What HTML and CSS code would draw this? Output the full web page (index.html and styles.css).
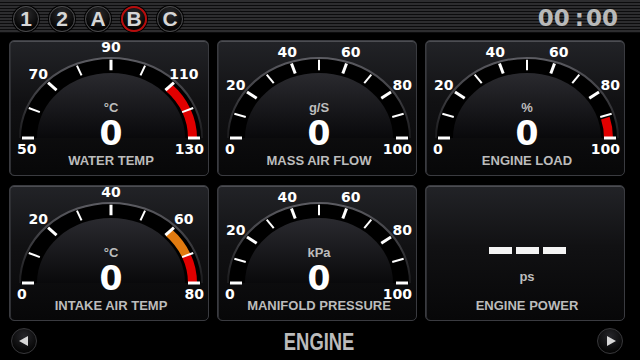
FILE: index.html
```html
<!DOCTYPE html>
<html lang="en">
<head>
    <meta charset="UTF-8">
    <meta name="viewport" content="width=device-width, initial-scale=1.0">
    <title>Engine Gauges</title>
    <link rel="stylesheet" href="styles.css">
</head>
<body>
    <header class="topbar">
        <div class="presets">
            <span class="preset">1</span>
            <span class="preset">2</span>
            <span class="preset">A</span>
            <span class="preset selected">B</span>
            <span class="preset">C</span>
        </div>
        <div class="clock">00<span class="colon">:</span>00</div>
    </header>

    <main class="panels">
        <section class="panel">
            <svg class="dial" viewBox="0 0 198 134" data-labels="50,70,90,110,130" data-zones="135:180:#e00000"></svg>
            <div class="readout">
                <span class="unit">°C</span>
                <span class="value">0</span>
                <span class="title">WATER TEMP</span>
            </div>
        </section>
        <section class="panel">
            <svg class="dial" viewBox="0 0 198 134" data-labels="0,20,40,60,80,100"></svg>
            <div class="readout">
                <span class="unit">g/S</span>
                <span class="value">0</span>
                <span class="title">MASS AIR FLOW</span>
            </div>
        </section>
        <section class="panel">
            <svg class="dial" viewBox="0 0 198 134" data-labels="0,20,40,60,80,100" data-zones="164:180:#e00000"></svg>
            <div class="readout">
                <span class="unit">%</span>
                <span class="value">0</span>
                <span class="title">ENGINE LOAD</span>
            </div>
        </section>
        <section class="panel">
            <svg class="dial" viewBox="0 0 198 134" data-labels="0,20,40,60,80" data-zones="135:157.5:#e07a10 157.5:180:#e00000"></svg>
            <div class="readout">
                <span class="unit">°C</span>
                <span class="value">0</span>
                <span class="title">INTAKE AIR TEMP</span>
            </div>
        </section>
        <section class="panel">
            <svg class="dial" viewBox="0 0 198 134" data-labels="0,20,40,60,80,100"></svg>
            <div class="readout">
                <span class="unit">kPa</span>
                <span class="value">0</span>
                <span class="title">MANIFOLD PRESSURE</span>
            </div>
        </section>
        <section class="panel">
            <div class="readout no-dial">
                <div class="dashes"><i></i><i></i><i></i></div>
                <span class="unit">ps</span>
                <span class="title">ENGINE POWER</span>
            </div>
        </section>
    </main>

    <footer class="bottombar">
        <span class="arrow prev"></span>
        <span class="page-name">ENGINE</span>
        <span class="arrow next"></span>
    </footer>

<script>
    const CX = 101, CY = 97, SY = 0.88; // centre of the dial, vertical squash

    function pt(r, deg) {
        const a = deg * Math.PI / 180;
        return [(CX - r * Math.cos(a)).toFixed(2), (CY - r * SY * Math.sin(a)).toFixed(2)];
    }

    function arc(r, from, to) {
        const [x1, y1] = pt(r, from);
        const [x2, y2] = pt(r, to);
        return `M${x1},${y1} A${r},${(r * SY).toFixed(2)} 0 0 1 ${x2},${y2}`;
    }

    document.querySelectorAll('.dial').forEach((svg, n) => {
        const labels = svg.dataset.labels.split(',');
        const zones = svg.dataset.zones ? svg.dataset.zones.split(' ') : [];
        const steps = (labels.length - 1) * 2;
        let out = `<defs>
            <linearGradient id="dome${n}" x1="0" y1="0" x2="0" y2="1">
                <stop offset="0" stop-color="#2a2a2f"/>
                <stop offset="1" stop-color="#09090b"/>
            </linearGradient>
            <linearGradient id="rim${n}" x1="0" y1="0" x2="0" y2="1">
                <stop offset="0" stop-color="#5c5c62"/>
                <stop offset="1" stop-color="#1a1a1c"/>
            </linearGradient>
        </defs>`;

        out += `<path d="${arc(91, 0, 180)} Z" fill="#000"/>`;
        out += `<path d="${arc(91, 0, 180)}" fill="none" stroke="url(#rim${n})" stroke-width="2"/>`;
        out += `<path d="${arc(74, 0, 180)} Z" fill="url(#dome${n})"/>`;

        // coloured warning zones
        zones.forEach(z => {
            const [from, to, color] = z.split(':');
            out += `<path d="${arc(81.5, +from, +to)}" fill="none" stroke="${color}" stroke-width="9"/>`;
        });

        // tick marks
        for (let i = 0; i <= steps; i++) {
            const deg = 180 * i / steps;
            const [x1, y1] = pt(89, deg);
            const [x2, y2] = pt(77, deg);
            out += `<line x1="${x1}" y1="${y1}" x2="${x2}" y2="${y2}" class="${i % 2 ? 'minor' : 'major'}"/>`;
        }

        // scale numbers
        labels.forEach((txt, j) => {
            const deg = 180 * j / (labels.length - 1);
            if (j === 0) {
                out += `<text x="7" y="113" text-anchor="start">${txt}</text>`;
            } else if (j === labels.length - 1) {
                out += `<text x="194" y="113" text-anchor="end">${txt}</text>`;
            } else {
                const [x, y] = pt(103, deg);
                out += `<text x="${x}" y="${(+y + 5).toFixed(2)}" text-anchor="middle">${txt}</text>`;
            }
        });

        svg.innerHTML = out;
    });
</script>
</body>
</html>
```

FILE: styles.css
```css
body {
    margin: 0;
    width: 640px;
    height: 360px;
    overflow: hidden;
    background: #000;
    font-family: "Liberation Sans", Arial, sans-serif;
    color: #fff;
}

/* top strip with preset buttons and clock */
.topbar {
    height: 33px;
    box-sizing: border-box;
    padding: 2px 22px 0 13px;
    display: flex;
    align-items: center;
    justify-content: space-between;
    background: repeating-linear-gradient(#2d2d2f 0 2px, #0c0c0d 2px 3px);
}
.presets {
    display: flex;
    gap: 10px;
    margin-top: 2px;
}
.preset {
    width: 26px;
    height: 26px;
    box-sizing: border-box;
    border-radius: 50%;
    border: 1px solid #4a4a4c;
    box-shadow: 0 0 0 1px #000;
    background: radial-gradient(circle at 50% 30%, #2c2c2e, #050505 70%);
    display: flex;
    align-items: center;
    justify-content: center;
    font-weight: bold;
    font-size: 21px;
    line-height: 1;
    color: #d6d6d6;
}
.preset.selected {
    border: 2px solid #b80c0c;
}
.clock {
    font-family: "DejaVu Sans", sans-serif;
    font-weight: bold;
    font-size: 23px;
    color: #b9b9b9;
}
.clock .colon {
    margin: 0 2px 0 5px;
}

/* gauge grid */
.panels {
    display: grid;
    grid-template-columns: repeat(3, 200px);
    grid-auto-rows: 136px;
    gap: 9px 8px;
    padding: 7px 0 0 9px;
}
.panel {
    box-sizing: border-box;
    border: 1px solid #3a3b40;
    border-radius: 5px;
    background: linear-gradient(#222327, #111113 45%, #070708);
    box-shadow: 0 0 0 1px #000, inset 0 1px 0 #4c4d52, inset 1px 0 0 #2e2f33;
    display: grid;
}
.panel > * {
    grid-area: 1 / 1;
}
.dial {
    display: block;
    width: 198px;
    height: 134px;
    overflow: visible;
}
.dial line {
    stroke: #fff;
}
.dial line.major {
    stroke-width: 3;
}
.dial line.minor {
    stroke-width: 2;
}
.dial text {
    font-family: "DejaVu Sans", sans-serif;
    font-weight: bold;
    font-size: 14px;
    fill: #fff;
}

.readout {
    display: flex;
    flex-direction: column;
    align-items: center;
    justify-content: flex-end;
    padding: 0 0 8px 4px;
}
.unit {
    font-weight: bold;
    font-size: 13px;
    line-height: 13px;
    color: #bdbdbd;
    margin-bottom: 5px;
}
.value {
    font-family: "DejaVu Sans", sans-serif;
    font-weight: bold;
    font-size: 33px;
    line-height: 30px;
    margin-bottom: 5px;
}
.title {
    font-weight: bold;
    font-size: 13px;
    line-height: 13px;
    color: #bcbcbc;
}
.no-dial .unit {
    margin-bottom: 16px;
}
.dashes {
    display: flex;
    gap: 4px;
    margin-bottom: 16px;
}
.dashes i {
    width: 23px;
    height: 7px;
    background: #f4f4f4;
}

/* bottom navigation */
.bottombar {
    height: 39px;
    box-sizing: border-box;
    padding: 0 17px 0 11px;
    display: grid;
    grid-template-columns: 1fr auto 1fr;
    align-items: center;
}
.arrow {
    width: 26px;
    height: 26px;
    box-sizing: border-box;
    border-radius: 50%;
    border: 1px solid #38383b;
    box-shadow: 0 0 0 1px #000;
    background: radial-gradient(circle at 50% 30%, #26262a, #050505 75%);
    display: flex;
    align-items: center;
    justify-content: center;
}
.arrow::after {
    content: "";
    border-top: 5px solid transparent;
    border-bottom: 5px solid transparent;
}
.arrow.prev::after {
    border-right: 9px solid #d8d8d8;
    margin-right: 2px;
}
.arrow.next {
    justify-self: end;
}
.arrow.next::after {
    border-left: 9px solid #d8d8d8;
    margin-left: 2px;
}
.page-name {
    font-weight: bold;
    font-size: 23px;
    color: #bbb;
    transform: scaleX(0.8);
    margin: 3px 0 0 5px;
}
```
